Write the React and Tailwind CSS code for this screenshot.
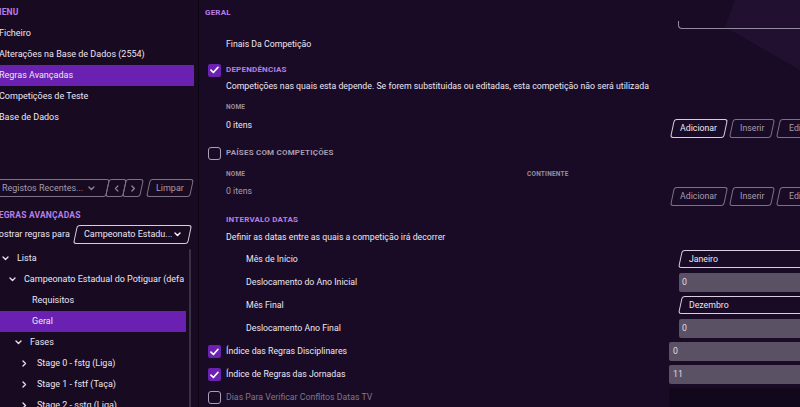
import React from "react";

const Check = () => (
  <svg width="9" height="8" viewBox="0 0 9 8" fill="none">
    <path d="M1 4.2 L3.4 6.5 L8 1.3" stroke="#fff" strokeWidth="1.7" strokeLinecap="round" strokeLinejoin="round" />
  </svg>
);

const Box = ({ on }) =>
  on ? (
    <div className="w-[13px] h-[13px] rounded-[2px] bg-[#6b22b0] flex items-center justify-center shrink-0">
      <Check />
    </div>
  ) : (
    <div className="w-[13px] h-[13px] rounded-[3px] border-[1.5px] border-[#aaa2b3] shrink-0" />
  );

const ChevDown = ({ c = "#e6e0ec" }) => (
  <svg width="7" height="5" viewBox="0 0 7 5" fill="none">
    <path d="M1 1 L3.5 3.5 L6 1" stroke={c} strokeWidth="1.4" strokeLinecap="round" strokeLinejoin="round" />
  </svg>
);
const ChevRight = ({ c = "#e6e0ec" }) => (
  <svg width="5" height="7" viewBox="0 0 5 7" fill="none">
    <path d="M1 1 L3.5 3.5 L1 6" stroke={c} strokeWidth="1.4" strokeLinecap="round" strokeLinejoin="round" />
  </svg>
);
const ChevLeft = ({ c = "#8a8094" }) => (
  <svg width="5" height="7" viewBox="0 0 5 7" fill="none">
    <path d="M4 1 L1.5 3.5 L4 6" stroke={c} strokeWidth="1.2" strokeLinecap="round" strokeLinejoin="round" />
  </svg>
);

const SkewBtn = ({ children, className = "", bright }) => (
  <div
    className={`h-[19px] -skew-x-12 rounded-[3px] border ${bright ? "border-[#d6cfdc] text-[#ece6f2]" : "border-[#7c7288] text-[#a59cae]"} flex items-center justify-center shrink-0 ${className}`}
  >
    <span className="skew-x-12 whitespace-nowrap">{children}</span>
  </div>
);

const MenuItem = ({ children, active }) => (
  <div className={`h-[21px] shrink-0 flex items-center -ml-[1px] ${active ? "bg-[#6a20b0] w-[195px]" : ""}`}>
    <span className="text-[#ece6f2] text-[9px] whitespace-nowrap">{children}</span>
  </div>
);

const TreeRow = ({ indent, chev, children, active }) => (
  <div className={`h-[21px] shrink-0 flex items-center ${active ? "bg-[#6a20b0] w-[186px]" : ""}`}>
    <div className="flex items-center" style={{ paddingLeft: indent }}>
      <div className="w-[15px] flex items-center">
        {chev === "down" && <ChevDown />}
        {chev === "right" && <ChevRight />}
      </div>
      <span className="text-[#ece6f2] whitespace-nowrap text-[9px]">{children}</span>
    </div>
  </div>
);

export default function App() {
  return (
    <div className="w-[800px] h-[407px] flex overflow-hidden bg-[#190b25] text-[8.75px] text-[#ece6f2] font-['Roboto',sans-serif] leading-none">
      {/* LEFT */}
      <div className="w-[199px] shrink-0 bg-[#170a21] border-r border-[#0c0512] flex flex-col relative overflow-hidden">
        <div className="h-[23px] shrink-0 flex items-center -ml-[6px] pt-[1px]">
          <span className="text-[#b77fe6] font-bold text-[8.5px] tracking-[0.2px]">MENU</span>
        </div>
        <MenuItem>Ficheiro</MenuItem>
        <MenuItem>Alterações na Base de Dados (2554)</MenuItem>
        <MenuItem active>Regras Avançadas</MenuItem>
        <MenuItem>Competições de Teste</MenuItem>
        <MenuItem>Base de Dados</MenuItem>

        {/* toolbar */}
        <div className="mt-[51px] h-[18px] shrink-0 flex items-center">
          <div className="h-[18px] w-[122px] -ml-[14px] -skew-x-12 rounded-[3px] border border-[#7c7288] flex items-center shrink-0">
            <div className="skew-x-12 flex items-center w-full pl-[15px] pr-[12px] justify-between">
              <span className="text-[#a59cae] whitespace-nowrap text-[9px]">Registos Recentes...</span>
              <ChevDown c="#8a8094" />
            </div>
          </div>
          <div className="h-[18px] w-[18px] -skew-x-12 rounded-[3px] border border-[#7c7288] flex items-center justify-center shrink-0 -ml-[1px]">
            <span className="skew-x-12"><ChevLeft /></span>
          </div>
          <div className="h-[18px] w-[18px] -skew-x-12 rounded-[3px] border border-[#7c7288] flex items-center justify-center shrink-0 -ml-[1px]">
            <span className="skew-x-12"><ChevRight c="#8a8094" /></span>
          </div>
          <div className="h-[18px] w-[44px] ml-[6px] -skew-x-12 rounded-[3px] border border-[#7c7288] flex items-center justify-center shrink-0">
            <span className="skew-x-12 text-[#a59cae] text-[9px]">Limpar</span>
          </div>
        </div>

        <div className="mt-[10px] h-[16px] shrink-0 flex items-center -ml-[7px]">
          <span className="text-[#b77fe6] font-bold text-[8.5px] tracking-[0.2px] whitespace-nowrap">REGRAS AVANÇADAS</span>
        </div>

        <div className="mt-[2px] h-[19px] shrink-0 flex items-center">
          <span className="-ml-[9px] whitespace-nowrap text-[#ece6f2] text-[9px]">Mostrar regras para</span>
          <div className="ml-[5px] h-[19px] w-[115px] -skew-x-12 rounded-[3px] border border-[#d6cfdc] flex items-center shrink-0">
            <div className="skew-x-12 flex items-center justify-between w-full pl-[8px] pr-[8px]">
              <span className="whitespace-nowrap text-[9px]">Campeonato Estadu...</span>
              <ChevDown c="#fff" />
            </div>
          </div>
        </div>

        <div className="mt-[4px] flex flex-col shrink-0">
          <TreeRow indent={2} chev="down">Lista</TreeRow>
          <TreeRow indent={9} chev="down">Campeonato Estadual do Potiguar (defa</TreeRow>
          <TreeRow indent={17}>Requisitos</TreeRow>
          <TreeRow indent={17} active>Geral</TreeRow>
          <TreeRow indent={15} chev="down">Fases</TreeRow>
          <TreeRow indent={22} chev="right">Stage 0 - fstg (Liga)</TreeRow>
          <TreeRow indent={22} chev="right">Stage 1 - fstf (Taça)</TreeRow>
          <TreeRow indent={22} chev="right">Stage 2 - sstg (Liga)</TreeRow>
        </div>
        {/* scrollbar */}
        <div className="absolute left-[189px] top-[249px] w-[2px] h-[170px] bg-[#3b3046] rounded-full" />
      </div>

      {/* RIGHT */}
      <div className="flex-1 relative overflow-hidden">
        <div className="absolute inset-0 bg-[#221031] [clip-path:polygon(536px_0,601px_0,601px_70px,526px_27px)]" />
        <div className="relative flex flex-col w-[640px]">
          {/* header */}
          <div className="h-[26px] flex items-start justify-between">
            <span className="ml-[6px] mt-[9px] text-[#b77fe6] font-bold text-[8px] tracking-[0.2px]">GERAL</span>
            <div className="mt-[21px] mr-[39px] w-[122px] h-[8px] border-b-[1.5px] border-l-[1.5px] border-[#958ba0] rounded-bl-[4px]" />
          </div>

          <div className="mt-[8px] h-[20px] flex items-center pl-[27px]">Finais Da Competição</div>

          <div className="mt-[7px] h-[18px] flex items-center pl-[9px] gap-[5px]">
            <Box on />
            <span className="text-[#b77fe6] font-bold text-[8px] tracking-[0.2px]">DEPENDÊNCIAS</span>
          </div>
          <div className="h-[14px] flex items-center pl-[27px] whitespace-nowrap">
            Competições nas quais esta depende. Se forem substituidas ou editadas, esta competição não será utilizada
          </div>
          <div className="mt-[7px] h-[14px] flex items-center pl-[27px]">
            <span className="text-[#978ea2] font-bold text-[6.5px] tracking-[0.2px]">NOME</span>
          </div>
          <div className="mt-[5px] h-[19px] flex items-start pl-[27px]">
            <span className="w-[446px] pt-[2px]">0 itens</span>
            <div className="flex gap-[5px]">
              <SkewBtn bright className="w-[54px]">Adicionar</SkewBtn>
              <SkewBtn className="w-[42px]">Inserir</SkewBtn>
              <SkewBtn className="w-[44px]">Editar</SkewBtn>
            </div>
          </div>

          <div className="mt-[6px] h-[18px] flex items-center pl-[9px] gap-[5px]">
            <Box />
            <span className="text-[#a59cae] font-bold text-[8px] tracking-[0.2px]">PAÍSES COM COMPETIÇÕES</span>
          </div>
          <div className="mt-[5px] h-[14px] flex items-center pl-[27px]">
            <span className="w-[301px] text-[#978ea2] font-bold text-[6.5px] tracking-[0.2px]">NOME</span>
            <span className="text-[#978ea2] font-bold text-[6.5px] tracking-[0.2px]">CONTINENTE</span>
          </div>
          <div className="mt-[6px] h-[19px] flex items-start pl-[27px]">
            <span className="w-[446px] text-[#a59cae]">0 itens</span>
            <div className="flex gap-[5px]">
              <SkewBtn className="w-[54px]">Adicionar</SkewBtn>
              <SkewBtn className="w-[42px]">Inserir</SkewBtn>
              <SkewBtn className="w-[44px]">Editar</SkewBtn>
            </div>
          </div>

          <div className="mt-[7px] h-[14px] flex items-center pl-[27px]">
            <span className="text-[#b77fe6] font-bold text-[8px] tracking-[0.2px]">INTERVALO DATAS</span>
          </div>
          <div className="mt-[3px] h-[14px] flex items-center pl-[27px]">
            Definir as datas entre as quais a competição irá decorrer
          </div>

          <div className="mt-[6px] h-[18px] flex items-center pl-[47px]">
            <span className="w-[434px]">Mês de Início</span>
            <div className="h-[18px] w-[140px] -skew-x-12 rounded-[3px] border border-[#d6cfdc] flex items-center">
              <span className="skew-x-12 pl-[8px]">Janeiro</span>
            </div>
          </div>
          <div className="mt-[5px] h-[19px] flex items-center pl-[47px]">
            <span className="w-[433px]">Deslocamento do Ano Inicial</span>
            <div className="h-[19px] w-[140px] rounded-[2px] bg-[#5a5164] flex items-center pl-[3px] text-[#e0dae6]">0</div>
          </div>
          <div className="mt-[4px] h-[18px] flex items-center pl-[47px]">
            <span className="w-[434px]">Mês Final</span>
            <div className="h-[18px] w-[140px] -skew-x-12 rounded-[3px] border border-[#d6cfdc] flex items-center">
              <span className="skew-x-12 pl-[8px]">Dezembro</span>
            </div>
          </div>
          <div className="mt-[5px] h-[19px] flex items-center pl-[47px]">
            <span className="w-[433px]">Deslocamento Ano Final</span>
            <div className="h-[19px] w-[140px] rounded-[2px] bg-[#5a5164] flex items-center pl-[3px] text-[#e0dae6]">0</div>
          </div>

          <div className="mt-[4px] h-[19px] flex items-center pl-[9px]">
            <div className="w-[461px] flex items-center gap-[5px]">
              <Box on />
              <span>Índice das Regras Disciplinares</span>
            </div>
            <div className="h-[19px] w-[150px] rounded-[2px] bg-[#5a5164] flex items-center pl-[4px] text-[#e0dae6]">0</div>
          </div>
          <div className="mt-[4px] h-[19px] flex items-center pl-[9px]">
            <div className="w-[461px] flex items-center gap-[5px]">
              <Box on />
              <span>Índice de Regras das Jornadas</span>
            </div>
            <div className="h-[19px] w-[150px] rounded-[2px] bg-[#5a5164] flex items-center pl-[4px] text-[#e0dae6]">11</div>
          </div>
          <div className="mt-[4px] h-[19px] flex items-center pl-[9px]">
            <div className="w-[461px] flex items-center gap-[5px]">
              <Box />
              <span className="text-[#7f7689]">Dias Para Verificar Conflitos Datas TV</span>
            </div>
            <div className="h-[19px] w-[150px] rounded-[2px] bg-[#12081b]" />
          </div>
        </div>
      </div>
    </div>
  );
}
